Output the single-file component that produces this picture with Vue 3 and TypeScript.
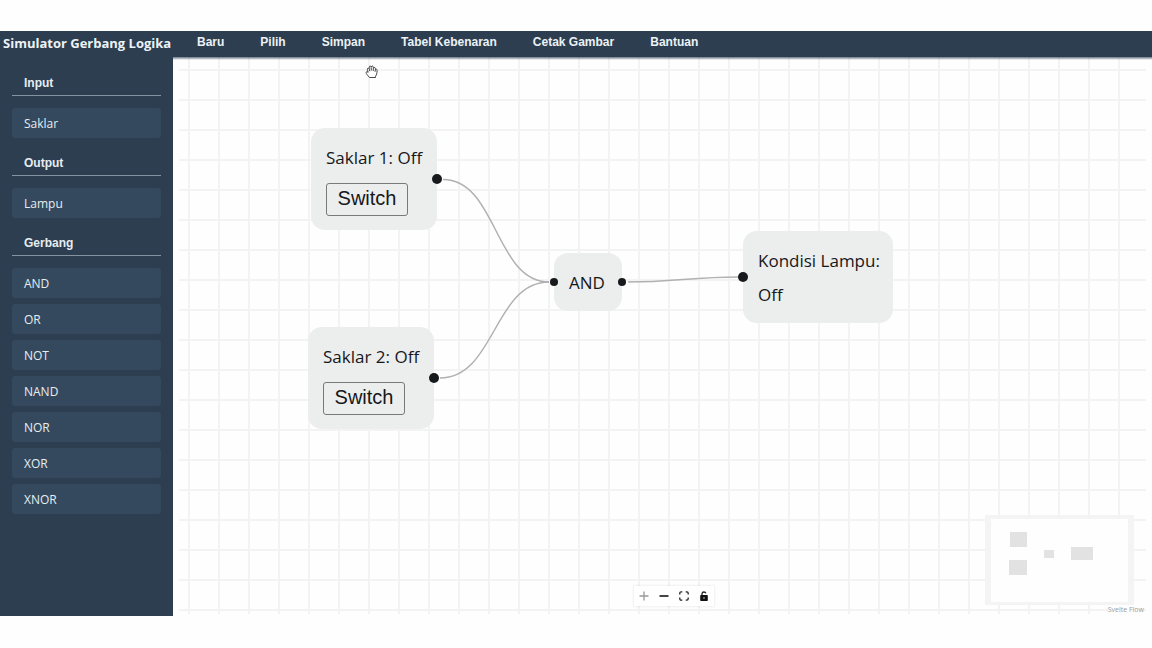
<script setup lang="ts">
import { ref } from 'vue'

interface Group { title: string; items: string[] }
interface SwitchNode { id: number; on: boolean }

const menu: string[] = ['Baru', 'Pilih', 'Simpan', 'Tabel Kebenaran', 'Cetak Gambar', 'Bantuan']
const groups: Group[] = [
  { title: 'Input', items: ['Saklar'] },
  { title: 'Output', items: ['Lampu'] },
  { title: 'Gerbang', items: ['AND', 'OR', 'NOT', 'NAND', 'NOR', 'XOR', 'XNOR'] },
]
const switches = ref<SwitchNode[]>([
  { id: 1, on: false },
  { id: 2, on: false },
])
const label = (on: boolean): string => (on ? 'On' : 'Off')
</script>

<template>
  <div class="app">
    <header class="topbar">
      <h1 class="brand">Simulator Gerbang Logika</h1>
      <nav class="menu">
        <button v-for="m in menu" :key="m" type="button" class="menu-item">{{ m }}</button>
      </nav>
    </header>

    <div class="body">
      <aside class="sidebar">
        <section v-for="g in groups" :key="g.title" class="group">
          <h2 class="group-title">{{ g.title }}</h2>
          <button v-for="item in g.items" :key="item" type="button" class="tool">{{ item }}</button>
        </section>
      </aside>

      <main class="canvas">
        <div class="grid"></div>

        <svg class="edges" width="720" height="400" aria-hidden="true">
          <path d="M270 122.500C324 122.500 322 225 376 225" />
          <path d="M267 321C322 321 321 225 376 225" />
          <path d="M455 225C500 225 520 220 565 220" />
        </svg>

        <div v-for="s in switches" :key="s.id" class="node" :class="`switch-${s.id}`">
          <span class="node-text">Saklar {{ s.id }}: {{ label(s.on) }}</span>
          <button type="button" class="switch" @click="s.on = !s.on">Switch</button>
          <i class="handle out"></i>
        </div>

        <div class="node gate">
          <span class="node-text">AND</span>
          <i class="handle in small"></i>
          <i class="handle out small"></i>
        </div>

        <div class="node lamp">
          <span class="node-text">Kondisi Lampu:</span>
          <span class="node-text">{{ label(switches.every((s) => s.on)) }}</span>
          <i class="handle in"></i>
        </div>

        <svg class="cursor" width="14" height="14" viewBox="0 0 14 14" aria-hidden="true">
          <path d="M4.500 12.500 2 9.500C.8 8 .9 6.800 1.800 6.600l1.400.7-.8-3c-.2-1.300 1.200-1.700 1.700-.6L4.300 2c.2-1.300 1.700-1.300 1.900 0 .3-1.300 2-1.200 2.100.1l.1 1c.5-1 1.900-.8 2 .3v1.200c.6-.8 1.700-.5 1.700.6 0 3-.5 4.600-1.600 6.100v1.200H5Z" />
          <path d="m4.200 3.700.6 2.500M6.200 2.200l.1 3.500M8.400 3l-.2 3M10.400 4.500 10 6.800" />
        </svg>

        <div class="controls">
          <button type="button" class="control" aria-label="Zoom in">
            <svg width="10" height="10" viewBox="0 0 10 10"><path class="faint" d="M5 .5v9M.5 5h9" /></svg>
          </button>
          <button type="button" class="control" aria-label="Zoom out">
            <svg width="10" height="10" viewBox="0 0 10 10"><path class="bold" d="M.5 5h9" /></svg>
          </button>
          <button type="button" class="control" aria-label="Fit view">
            <svg width="10" height="10" viewBox="0 0 10 10"><path d="M.8 3.400V2.200Q.8.800 2.200.800H3.300M6.700.800h1.100Q9.200.8 9.200 2.200v1.200M9.200 6.600v1.200Q9.200 9.200 7.800 9.200H6.700M3.300 9.200H2.200Q.8 9.200.8 7.800V6.600" /></svg>
          </button>
          <button type="button" class="control" aria-label="Toggle lock">
            <svg width="10" height="10" viewBox="0 0 10 10"><path d="M3 5V2.800Q3.100 1 5 1q1.400 0 1.900 1.200" /><path class="solid" fill-rule="evenodd" d="M2 4h6q.8 0 .8.8v4.400q0 .8-.8.8H2q-.8 0-.8-.8V4.800Q1.200 4 2 4Zm3 2.300a.7.7 0 1 0 0 1.400.7.7 0 0 0 0-1.400Z" /></svg>
          </button>
        </div>

        <svg class="minimap" viewBox="0 0 149 90" aria-hidden="true">
          <rect class="mask" width="149" height="90" />
          <rect class="view" x="6" y="4" width="137" height="83" />
          <rect x="25" y="17" width="17" height="15" />
          <rect x="24" y="45" width="18" height="15" />
          <rect x="59" y="35" width="10" height="8" />
          <rect x="86" y="32" width="22" height="13" />
        </svg>
        <a class="credit" href="#">Svelte Flow</a>
      </main>
    </div>
  </div>
</template>

<style>
body {
  background: #fefefe;
}
</style>

<style scoped>
.app {
  box-sizing: border-box;
  height: 100vh;
  padding: 31px 0 32px;
  display: flex;
  flex-direction: column;
  font-family: "Open Sans", "Noto Sans", sans-serif;
  color: #16181b;
}
button {
  margin: 0;
  border: 0;
  background: none;
  color: inherit;
  cursor: pointer;
}
.topbar {
  flex: none;
  display: flex;
  align-items: flex-start;
  height: 26px;
  padding-left: 3px;
  background: #2c3e50;
  color: #ecf2f6;
}
.brand {
  width: 194px;
  margin: 0;
  font-size: 13px;
  line-height: 24px;
  white-space: nowrap;
}
.menu {
  display: flex;
  gap: 36px;
}
.menu-item {
  padding: 0;
  font: bold 12px/22px "Liberation Sans", Arial, sans-serif;
}
.body {
  flex: 1;
  min-height: 0;
  display: flex;
}
.sidebar {
  box-sizing: border-box;
  flex: none;
  width: 173px;
  padding: 12px;
  background: #2c3e50;
  color: #e6edf2;
}
.group {
  display: flex;
  flex-direction: column;
  gap: 6px;
  margin-bottom: 11px;
}
.group-title {
  margin: 0 0 6px;
  padding: 5px 12px 3px;
  border-bottom: 1px solid #8593a1;
  font: bold 12px/18px "Liberation Sans", Arial, sans-serif;
}
.tool {
  height: 30px;
  padding: 0 12px;
  border-radius: 3px;
  background: #34495e;
  font-family: inherit;
  font-size: 12px;
  text-align: left;
}
.canvas {
  position: relative;
  flex: 1;
  overflow: hidden;
}
.canvas::after {
  content: "";
  position: absolute;
  inset: 0 0 auto;
  height: 3px;
  background: linear-gradient(rgba(44, 62, 80, 0.7), rgba(44, 62, 80, 0));
}
.grid {
  position: absolute;
  inset: 0 6px 2px;
  background-image:
    linear-gradient(to right, #f3f3f3 2px, transparent 2px),
    linear-gradient(to bottom, #f3f3f3 2px, transparent 2px);
  background-size: 30px 30px;
  background-position: 9px 12px;
}
.edges {
  position: absolute;
  left: 0;
  top: 0;
  fill: none;
  stroke: #b1b1b3;
  stroke-width: 1.5;
}
.node {
  position: absolute;
  box-sizing: border-box;
  display: flex;
  flex-direction: column;
  align-items: flex-start;
  padding: 13px 15px 11px;
  border-radius: 14px;
  background: #eceded;
}
.node-text {
  font-size: 17px;
  line-height: 34px;
  white-space: nowrap;
}
.switch-1 {
  left: 138px;
  top: 71px;
  width: 126px;
}
.switch-2 {
  left: 135px;
  top: 270px;
  width: 126px;
}
.gate {
  left: 381px;
  top: 196px;
  width: 68px;
}
.lamp {
  left: 570px;
  top: 174px;
  width: 150px;
}
.switch {
  width: 82px;
  height: 33px;
  margin: 8px 0 3px;
  padding: 0 0 3px;
  border: 1px solid #77797b;
  border-radius: 3px;
  font: 20px/28px "Liberation Sans", Arial, sans-serif;
}
.handle {
  position: absolute;
  top: 50%;
  width: 10px;
  height: 10px;
  border-radius: 50%;
  background: #17191d;
  transform: translateY(-50%);
}
.handle.small {
  width: 8px;
  height: 8px;
}
.handle.out {
  right: -5px;
}
.handle.in {
  left: -5px;
}
.handle.small.out {
  right: -4px;
}
.handle.small.in {
  left: -4px;
}
.cursor {
  position: absolute;
  left: 192px;
  top: 8px;
  fill: #ffffff;
  stroke: #333333;
  stroke-width: 0.9;
}
.controls {
  position: absolute;
  left: 461px;
  bottom: 10px;
  display: flex;
  background: #ffffff;
  box-shadow: 0 0 2px 1px rgba(0, 0, 0, 0.06);
}
.control {
  display: grid;
  place-items: center;
  width: 20px;
  height: 20px;
  padding: 0;
}
.control svg {
  fill: none;
  stroke: #222222;
  stroke-width: 1.3;
}
.control .faint {
  stroke: #999999;
}
.control .bold {
  stroke: #444444;
  stroke-width: 2;
}
.control .solid {
  fill: #111111;
  stroke: none;
}
.minimap {
  position: absolute;
  right: 18px;
  bottom: 11px;
  width: 149px;
  height: 90px;
  fill: #e2e2e2;
}
.minimap .mask {
  fill: #f4f4f4;
}
.minimap .view {
  fill: #fefefe;
}
.credit {
  position: absolute;
  right: 8px;
  bottom: 1px;
  background: #fefefe;
  color: #999999;
  font-size: 7px;
  line-height: 10px;
  text-decoration: none;
}
</style>
